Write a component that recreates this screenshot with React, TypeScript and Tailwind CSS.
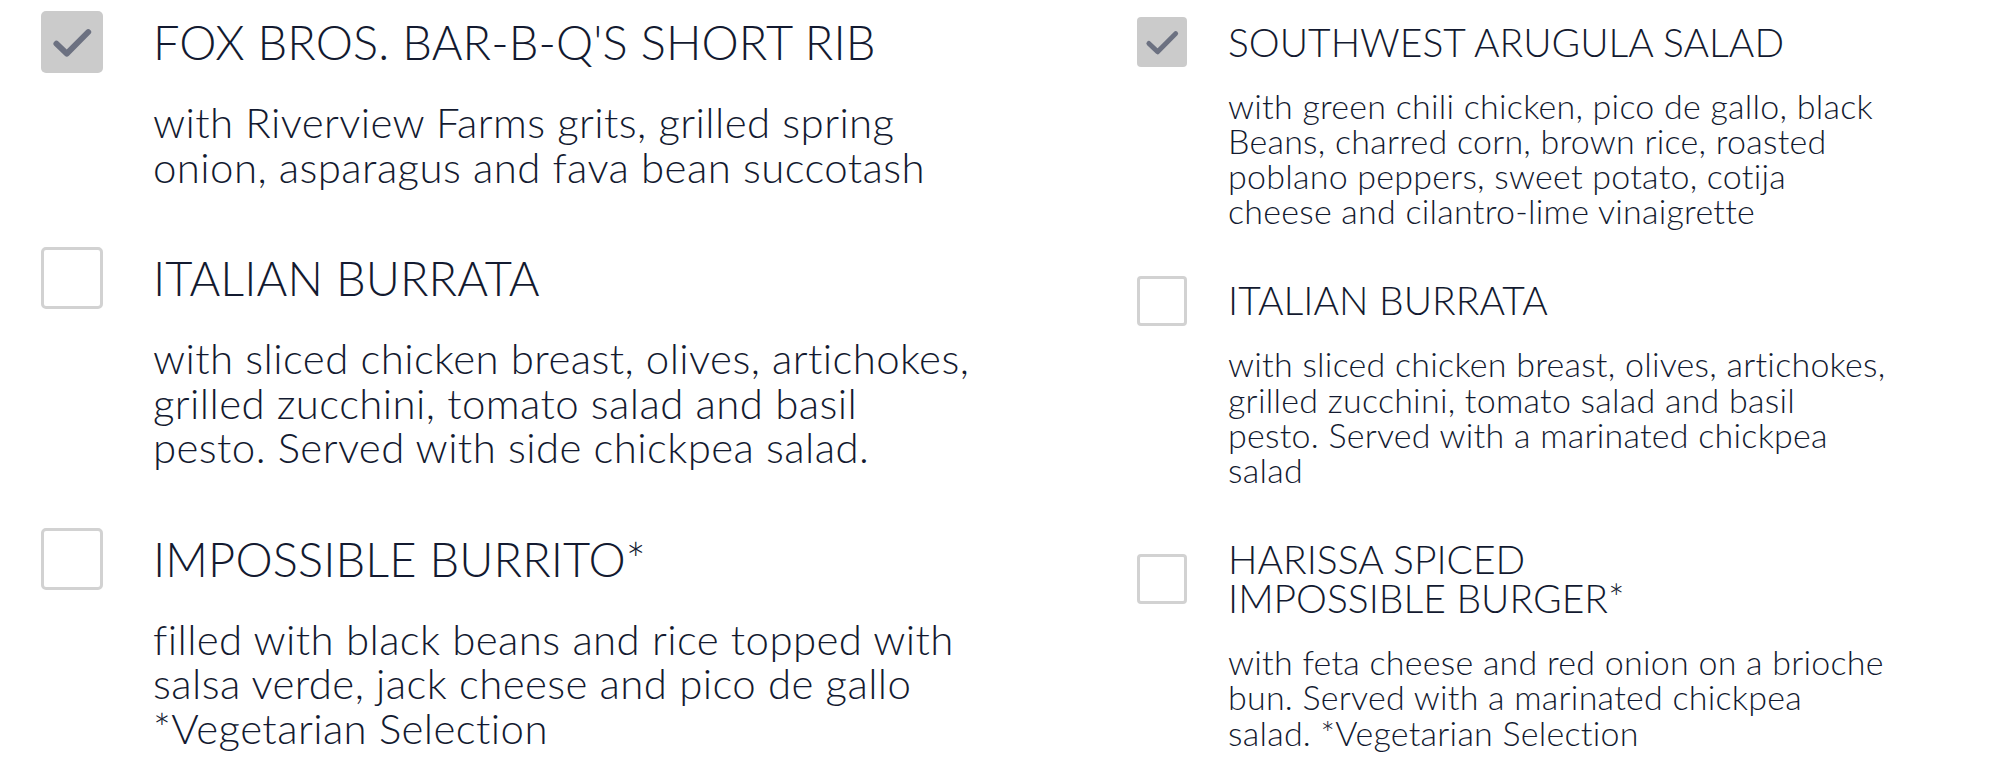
import React from 'react';

interface MenuItem {
  title: string[];
  lines: string[];
  checked?: boolean;
}

const leftItems: MenuItem[] = [
  {
    title: ["FOX BROS. BAR-B-Q'S SHORT RIB"],
    lines: ['with Riverview Farms grits, grilled spring', 'onion, asparagus and fava bean succotash'],
    checked: true,
  },
  {
    title: ['ITALIAN BURRATA'],
    lines: [
      'with sliced chicken breast, olives, artichokes,',
      'grilled zucchini, tomato salad and basil',
      'pesto. Served with side chickpea salad.',
    ],
  },
  {
    title: ['IMPOSSIBLE BURRITO*'],
    lines: [
      'filled with black beans and rice topped with',
      'salsa verde, jack cheese and pico de gallo',
      '*Vegetarian Selection',
    ],
  },
];

const rightItems: MenuItem[] = [
  {
    title: ['SOUTHWEST ARUGULA SALAD'],
    lines: [
      'with green chili chicken, pico de gallo, black',
      'Beans, charred corn, brown rice, roasted',
      'poblano peppers, sweet potato, cotija',
      'cheese and cilantro-lime vinaigrette',
    ],
    checked: true,
  },
  {
    title: ['ITALIAN BURRATA'],
    lines: [
      'with sliced chicken breast, olives, artichokes,',
      'grilled zucchini, tomato salad and basil',
      'pesto. Served with a marinated chickpea',
      'salad',
    ],
  },
  {
    title: ['HARISSA SPICED', 'IMPOSSIBLE BURGER*'],
    lines: [
      'with feta cheese and red onion on a brioche',
      'bun. Served with a marinated chickpea',
      'salad. *Vegetarian Selection',
    ],
  },
];

// Check mark shared by both box sizes
const CheckMark: React.FC<{ size: number }> = ({ size }) => (
  <svg width={size} height={size} viewBox="0 0 24 24" fill="none">
    <path
      d="M4.5 12.8l5 4.8L19.8 7.2"
      stroke="#6c7181"
      strokeWidth="2.8"
      strokeLinecap="round"
      strokeLinejoin="round"
    />
  </svg>
);

const LeftRow: React.FC<{ item: MenuItem }> = ({ item }) => (
  <div>
    <div className="flex items-center gap-[50px]">
      {item.checked ? (
        <div className="-my-[7px] flex h-[62px] w-[62px] shrink-0 items-center justify-center rounded-[5px] bg-[#cbcbcb]">
          <CheckMark size={50} />
        </div>
      ) : (
        <div className="-my-[7px] h-[62px] w-[62px] shrink-0 rounded-[5px] border-[3px] border-[#d2d2d2] bg-white" />
      )}
      <div className="text-[47px] leading-[48px] font-light tracking-[0.1px]">
        {item.title.map((t) => (
          <div key={t}>{t}</div>
        ))}
      </div>
    </div>
    <div className="mt-[34px] ml-[112px] text-[42px] leading-[44.5px] font-light tracking-[0.4px]">
      {item.lines.map((l) => (
        <div key={l} className="whitespace-nowrap">
          {l}
        </div>
      ))}
    </div>
  </div>
);

const RightRow: React.FC<{ item: MenuItem }> = ({ item }) => (
  <div>
    <div className="flex items-center gap-[41px]">
      {item.checked ? (
        <div className="-my-[6px] flex h-[50px] w-[50px] shrink-0 items-center justify-center rounded-[4px] bg-[#cbcbcb]">
          <CheckMark size={42} />
        </div>
      ) : (
        <div className="-my-[6px] h-[50px] w-[50px] shrink-0 rounded-[4px] border-[3px] border-[#d2d2d2] bg-white" />
      )}
      <div className="text-[39px] leading-[39px] font-light">
        {item.title.map((t) => (
          <div key={t}>{t}</div>
        ))}
      </div>
    </div>
    <div className="mt-[26px] ml-[91px] text-[34px] leading-[35.2px] font-light tracking-[0.25px]">
      {item.lines.map((l) => (
        <div key={l} className="whitespace-nowrap">
          {l}
        </div>
      ))}
    </div>
  </div>
);

export default function App() {
  return (
    <div
      className="flex h-[775px] w-[1997px] overflow-hidden bg-white text-[#131a30]"
      style={{ fontFamily: 'Lato, "Noto Sans", sans-serif' }}
    >
      <div className="flex w-[1137px] shrink-0 flex-col gap-[65px] pt-[18px] pl-[41px]">
        {leftItems.map((item) => (
          <LeftRow key={item.title.join(' ')} item={item} />
        ))}
      </div>
      <div className="flex flex-1 flex-col gap-[53px] pt-[22.5px]">
        {rightItems.map((item) => (
          <RightRow key={item.title.join(' ')} item={item} />
        ))}
      </div>
    </div>
  );
}
